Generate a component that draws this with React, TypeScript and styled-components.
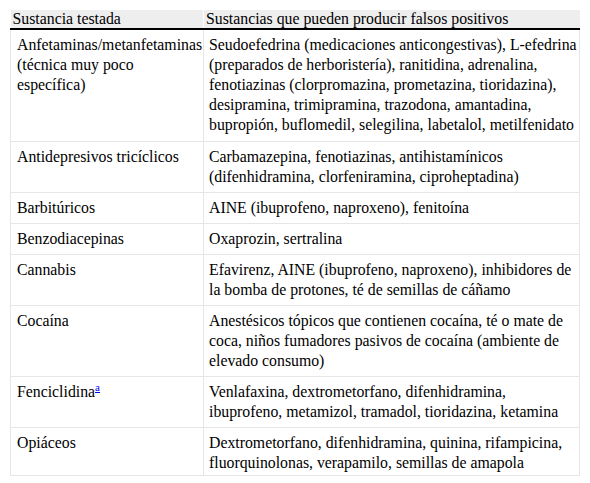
import React from 'react';
import styled, { createGlobalStyle } from 'styled-components';

const serif = `'Liberation Serif', 'Times New Roman', serif`;

const GlobalStyle = createGlobalStyle`
  html, body {
    margin: 0;
    padding: 0;
    background: #ffffff;
  }
  body {
    font-family: ${serif};
    color: #000000;
  }
`;

const Page = styled.div`
  padding: 10px 10px 0 10px;
`;

const Table = styled.table`
  width: 570px;
  table-layout: fixed;
  border-collapse: collapse;
  font-family: ${serif};
  font-size: 15.8px;
  line-height: 20px;
  color: #000000;
`;

const Col = styled.col<{ $w?: number }>`
  width: ${(p) => (p.$w ? `${p.$w}px` : 'auto')};
`;

const HeadCell = styled.th`
  font-family: ${serif};
  font-size: 15.8px;
  background: #eeeeee;
  font-weight: normal;
  text-align: left;
  vertical-align: top;
  padding: 0 2px;
  height: 18px;
  line-height: 18px;
  border-left: 1px solid #ffffff;
  border-bottom: 2px solid #000000;

  &:first-child {
    border-left: none;
  }
`;

const Cell = styled.td`
  font-family: ${serif};
  font-size: 15.8px;
  line-height: 20px;
  vertical-align: top;
  padding: 5px 6px 5px 6px;
  border: 1px solid #e6e6e6;

  & + & {
    padding-left: 5px;
    padding-right: 1px;
  }
`;

const Row = styled.tr`
  &:first-child td {
    padding-bottom: 6px;
  }
  &:last-child td {
    padding-bottom: 2px;
  }
`;

const Note = styled.a`
  color: #0000ee;
  text-decoration: underline;
  font-size: 11px;
  vertical-align: super;
  line-height: 0;
`;

type Entry = { name: React.ReactNode; causes: string };

const rows: Entry[] = [
  {
    name: 'Anfetaminas/metanfetaminas (técnica muy poco específica)',
    causes:
      'Seudoefedrina (medicaciones anticongestivas), L-efedrina (preparados de herboristería), ranitidina, adrenalina, fenotiazinas (clorpromazina, prometazina, tioridazina), desipramina, trimipramina, trazodona, amantadina, bupropión, buflomedil, selegilina, labetalol, metilfenidato',
  },
  {
    name: 'Antidepresivos tricíclicos',
    causes:
      'Carbamazepina, fenotiazinas, antihistamínicos (difenhidramina, clorfeniramina, ciproheptadina)',
  },
  { name: 'Barbitúricos', causes: 'AINE (ibuprofeno, naproxeno), fenitoína' },
  { name: 'Benzodiacepinas', causes: 'Oxaprozin, sertralina' },
  {
    name: 'Cannabis',
    causes:
      'Efavirenz, AINE (ibuprofeno, naproxeno), inhibidores de la bomba de protones, té de semillas de cáñamo',
  },
  {
    name: 'Cocaína',
    causes:
      'Anestésicos tópicos que contienen cocaína, té o mate de coca, niños fumadores pasivos de cocaína (ambiente de elevado consumo)',
  },
  {
    name: (
      <>
        Fenciclidina<Note href="#nota">a</Note>
      </>
    ),
    causes:
      'Venlafaxina, dextrometorfano, difenhidramina, ibuprofeno, metamizol, tramadol, tioridazina, ketamina',
  },
  {
    name: 'Opiáceos',
    causes:
      'Dextrometorfano, difenhidramina, quinina, rifampicina, fluorquinolonas, verapamilo, semillas de amapola',
  },
];

export default function App() {
  return (
    <Page>
      <GlobalStyle />
      <Table>
        <colgroup>
          <Col $w={193} />
          <Col />
        </colgroup>
        <thead>
          <tr>
            <HeadCell>Sustancia testada</HeadCell>
            <HeadCell>Sustancias que pueden producir falsos positivos</HeadCell>
          </tr>
        </thead>
        <tbody>
          {rows.map((r, i) => (
            <Row key={i}>
              <Cell>{r.name}</Cell>
              <Cell>{r.causes}</Cell>
            </Row>
          ))}
        </tbody>
      </Table>
    </Page>
  );
}
